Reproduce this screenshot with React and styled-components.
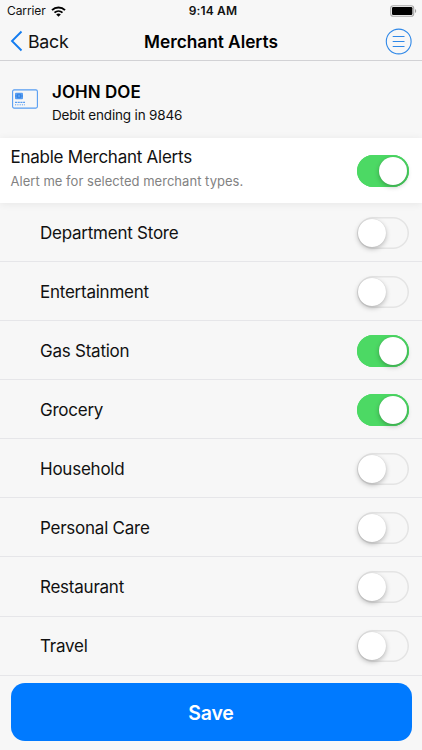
import React, { useState } from 'react';
import styled, { createGlobalStyle } from 'styled-components';

const GlobalStyle = createGlobalStyle`
  * {
    box-sizing: border-box;
  }

  body {
    margin: 0;
    background-color: #f7f7f7;
    color: #111;
    font-family: Inter, 'Liberation Sans', sans-serif;
  }
`;

const Screen = styled.div`
  display: flex;
  flex-direction: column;
  width: 422px;
  height: 750px;
  overflow: hidden;
`;

const StatusBar = styled.div`
  display: grid;
  grid-template-columns: 1fr auto 1fr;
  align-items: center;
  height: 22px;
  padding: 0 5px 0 7px;
  font-size: 12px;
  line-height: 22px;
`;

const Carrier = styled.div`
  display: flex;
  align-items: center;
  gap: 5px;
  letter-spacing: -0.1px;
`;

const Clock = styled.div`
  font-weight: 600;
  letter-spacing: 0.15px;
  padding-left: 2px;
`;

const Battery = styled.svg`
  justify-self: end;
`;

const NavBar = styled.header`
  display: grid;
  grid-template-columns: 1fr auto 1fr;
  align-items: center;
  height: 39px;
  padding: 0 10px;
  border-bottom: 1px solid #d2d2d5;
`;

const BackButton = styled.button`
  display: flex;
  align-items: center;
  gap: 5px;
  padding: 0;
  border: 0;
  background: none;
  color: inherit;
  font: inherit;
  font-size: 17.8px;
  letter-spacing: -0.3px;
`;

const Title = styled.h1`
  margin: 0;
  font-size: 17.3px;
  font-weight: 600;
  color: #000;
  letter-spacing: -0.02px;
`;

const MenuButton = styled.button`
  display: flex;
  justify-self: end;
  padding: 0;
  border: 0;
  background: none;
`;

const Account = styled.section`
  display: flex;
  align-items: flex-start;
  gap: 14px;
  height: 77px;
  padding: 19px 12px 0;

  svg {
    margin-top: 9px;
  }
`;

const AccountName = styled.div`
  font-size: 17px;
  font-weight: 600;
  line-height: 24px;
  letter-spacing: 0.05px;
  color: #000;
`;

const AccountInfo = styled.div`
  font-size: 13.5px;
  line-height: 23px;
  letter-spacing: -0.17px;
`;

const EnablePanel = styled.section`
  display: flex;
  align-items: center;
  justify-content: space-between;
  position: relative;
  height: 65px;
  padding: 0 13.5px 0 10.5px;
  background-color: #fff;
  box-shadow: 0 1px 8px rgba(0, 0, 0, 0.07);
`;

const EnableText = styled.div`
  padding-bottom: 4px;
`;

const EnableTitle = styled.div`
  font-size: 17px;
  line-height: 24px;
  letter-spacing: -0.25px;
`;

const EnableHint = styled.div`
  font-size: 13px;
  line-height: 24px;
  letter-spacing: 0.03px;
  color: #828282;
`;

const List = styled.ul`
  margin: 0;
  padding: 0;
  list-style: none;
`;

const Row = styled.li`
  display: flex;
  align-items: center;
  justify-content: space-between;
  height: 59.08px;
  padding: 1px 13.5px 0 40px;
  border-bottom: 1px solid #e6e6e9;
  font-size: 17px;
  letter-spacing: -0.24px;
`;

const Toggle = styled.button`
  display: flex;
  justify-content: ${({ $on }) => ($on ? 'flex-end' : 'flex-start')};
  align-items: center;
  flex: none;
  width: 52px;
  height: 32px;
  padding: 0 1.5px;
  border: 0;
  border-radius: 16px;
  background-color: ${({ $on }) => ($on ? '#4cd964' : 'transparent')};
  box-shadow: inset 0 0 0 1.5px ${({ $on }) => ($on ? '#4cd964' : '#e4e4e4')};
`;

const Knob = styled.span`
  width: 28px;
  height: 28px;
  border-radius: 50%;
  background-color: #fff;
  box-shadow: 0 2px 5px rgba(0, 0, 0, 0.25), 0 0 1px rgba(0, 0, 0, 0.15);
`;

const Footer = styled.footer`
  padding: 7.8px 10.5px;
`;

const SaveButton = styled.button`
  display: block;
  width: 100%;
  height: 58px;
  padding: 1px 0 0;
  border: 0;
  border-radius: 14px;
  background-color: #007aff;
  color: #fff;
  font: inherit;
  font-size: 19.5px;
  font-weight: 600;
  letter-spacing: -0.2px;
`;

const WifiIcon = () => (
  <svg width="15" height="11" viewBox="0 0 15 11" fill="none" stroke="#000">
    <path d="M1 4.1C4.6 .6 10.4 .6 14 4.1" strokeWidth="2" />
    <path d="M3.5 6.7C5.8 4.5 9.2 4.5 11.5 6.7" strokeWidth="1.8" />
    <path d="M7.5 10.7L5.2 8.4C6.5 7.2 8.5 7.2 9.8 8.4Z" fill="#000" stroke="none" />
  </svg>
);

const BatteryIcon = () => (
  <Battery width="27" height="12" viewBox="0 0 27 12">
    <rect x="0.7" y="0.7" width="23" height="10.6" rx="2.6" fill="none" stroke="#a8a8a8" strokeWidth="1.1" />
    <rect x="2" y="2" width="20.4" height="8" rx="1.2" />
    <path d="M25 4C26.6 4.5 26.6 7.5 25 8Z" fill="#a0a0a0" />
  </Battery>
);

const ChevronIcon = () => (
  <svg width="13" height="22" viewBox="0 0 13 22" fill="none" stroke="#137cf0" strokeWidth="1.9">
    <path d="M11.5 1.5L2 11L11.5 20.5" />
  </svg>
);

const MenuIcon = () => (
  <svg width="27" height="27" viewBox="0 0 27 27" fill="none" stroke="#2f88e8">
    <circle cx="13.7" cy="13.5" r="12.4" strokeWidth="1.1" />
    <path d="M7.7 8.5H19.5M7.7 13.5H19.5M7.7 18.5H19.5" strokeWidth="1.2" />
  </svg>
);

const CardIcon = () => (
  <svg width="26" height="20" viewBox="0 0 26 20" fill="none" stroke="#579df2">
    <rect x="0.6" y="0.9" width="24.8" height="18.2" rx="1.5" strokeWidth="1.1" />
    <rect x="3" y="3.8" width="8" height="6.4" rx="1" fill="#579df2" stroke="none" />
    <path d="M3 7H5.5M8.5 7H11M5.5 5.3H8.5V8.7H5.5Z" stroke="#2777d8" strokeWidth="0.6" />
    <path d="M3 13.3H13" strokeWidth="1.3" strokeDasharray="2.1 0.6" />
    <path d="M3 15.8H13" strokeWidth="1" strokeDasharray="1.2 1.1" />
  </svg>
);

const Switch = ({ on, label, onChange }) => (
  <Toggle type="button" role="switch" aria-checked={on} aria-label={label} $on={on} onClick={onChange}>
    <Knob />
  </Toggle>
);

const merchantTypes = [
  'Department Store',
  'Entertainment',
  'Gas Station',
  'Grocery',
  'Household',
  'Personal Care',
  'Restaurant',
  'Travel',
];

const App = () => {
  const [enabled, setEnabled] = useState(true);
  const [selected, setSelected] = useState(['Gas Station', 'Grocery']);

  const toggleType = (type) => {
    setSelected((current) =>
      current.includes(type) ? current.filter((item) => item !== type) : [...current, type]
    );
  };

  return (
    <Screen>
      <GlobalStyle />
      <StatusBar>
        <Carrier>
          Carrier
          <WifiIcon />
        </Carrier>
        <Clock>9:14 AM</Clock>
        <BatteryIcon />
      </StatusBar>
      <NavBar>
        <BackButton type="button">
          <ChevronIcon />
          Back
        </BackButton>
        <Title>Merchant Alerts</Title>
        <MenuButton type="button" aria-label="Menu">
          <MenuIcon />
        </MenuButton>
      </NavBar>
      <Account>
        <CardIcon />
        <div>
          <AccountName>JOHN DOE</AccountName>
          <AccountInfo>Debit ending in 9846</AccountInfo>
        </div>
      </Account>
      <EnablePanel>
        <EnableText>
          <EnableTitle>Enable Merchant Alerts</EnableTitle>
          <EnableHint>Alert me for selected merchant types.</EnableHint>
        </EnableText>
        <Switch on={enabled} label="Enable Merchant Alerts" onChange={() => setEnabled(!enabled)} />
      </EnablePanel>
      <List>
        {merchantTypes.map((type) => (
          <Row key={type}>
            {type}
            <Switch on={selected.includes(type)} label={type} onChange={() => toggleType(type)} />
          </Row>
        ))}
      </List>
      <Footer>
        <SaveButton type="button">Save</SaveButton>
      </Footer>
    </Screen>
  );
};

export default App;
